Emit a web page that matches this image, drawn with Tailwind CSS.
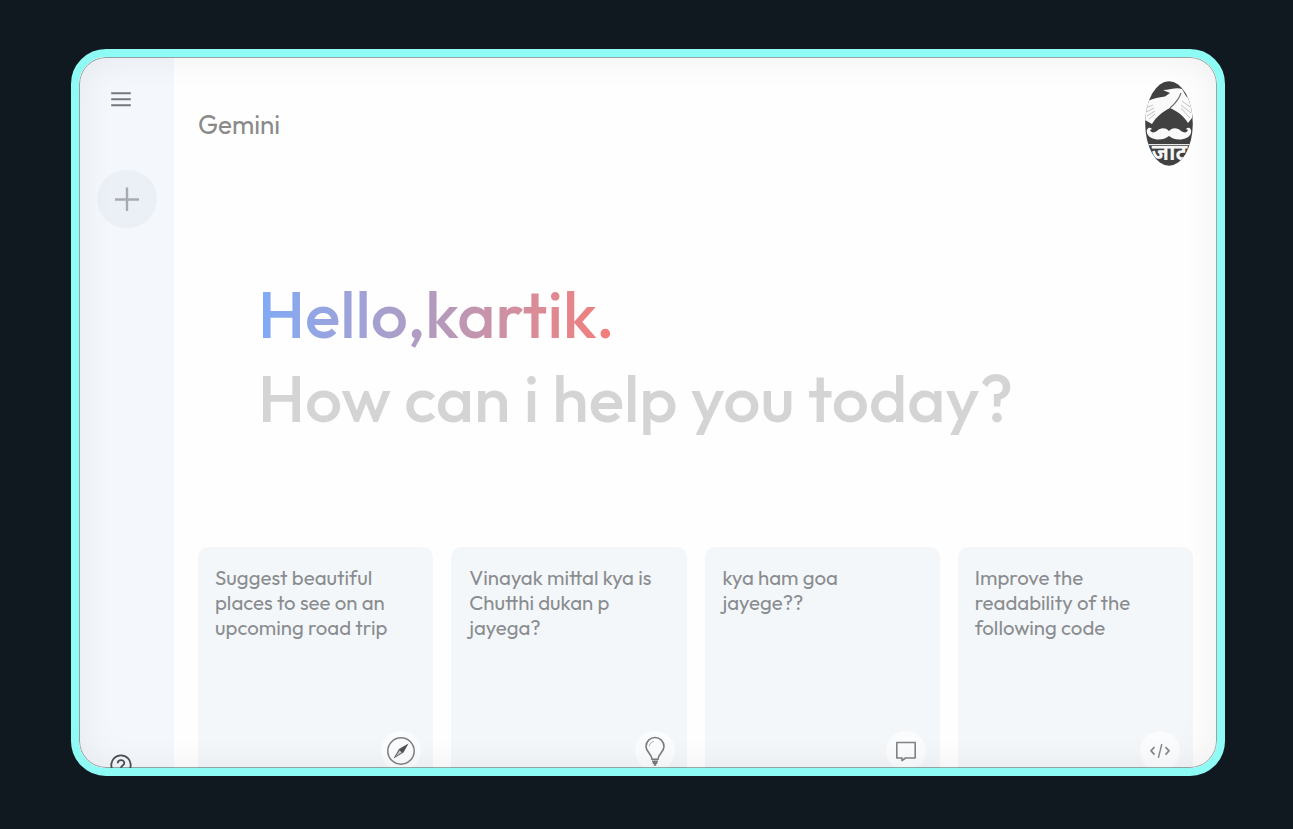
<!DOCTYPE html>
<html lang="en">
<head>
<meta charset="utf-8">
<title>Gemini</title>
<script src="https://cdn.jsdelivr.net/npm/@tailwindcss/browser@4"></script>
</head>
<body class="h-screen overflow-hidden bg-[#111920] pt-[49px] pl-[71px] font-[Outfit,Lato,sans-serif]">
<div class="relative flex h-[727px] w-[1154px] overflow-hidden rounded-[35px] border-8 border-[#8efcf5] bg-[#fefefe]">
  <aside class="flex w-[95px] shrink-0 flex-col items-start bg-[#f4f7fb] pl-px">
    <svg class="mt-[32px] ml-[31px] h-5 w-5 shrink-0" viewBox="0 0 20 20" fill="none" stroke="#74787c" stroke-width="2.1"><path d="M.2 4.3h19.6M.2 10.3h19.6M.2 16.2h19.6"/></svg>
    <div class="mt-[61px] ml-[17px] flex h-[58px] w-[60px] shrink-0 items-center justify-center rounded-full bg-[#ebeff6]">
      <svg class="h-6 w-6" viewBox="0 0 24 24" fill="none" stroke="#a8aaae" stroke-width="2.4"><path d="M0 12.5h24M12 .5v24"/></svg>
    </div>
    <svg class="mt-[526px] ml-[30px] h-[22px] w-[22px] shrink-0" viewBox="0 0 22 22" fill="none" stroke="#4c5053" stroke-width="1.8"><circle cx="11" cy="11" r="9.7"/><path d="M7.7 9.3c.2-4.2 6.6-4.1 6.6-.3 0 2.5-3.3 2.4-3.3 5"/></svg>
  </aside>
  <main class="flex min-w-0 flex-1 flex-col pt-px pr-6 pl-6">
    <header class="flex shrink-0 items-start justify-between pt-[23px]">
      <h1 class="mt-[27px] text-[26px] leading-[34px] font-normal whitespace-nowrap text-[#8a8a8a]">Gemini</h1>
      <svg class="h-[85px] w-12" viewBox="0 0 48 85">
        <defs><clipPath id="oval"><ellipse cx="24" cy="42.5" rx="23.8" ry="42.3"/></clipPath></defs>
        <g clip-path="url(#oval)">
          <rect width="48" height="85" fill="#414141"/>
          <path d="M0 22C5 18 12 16.500 20 15.500L25 12 18 9C26 9 31 6 37 8L41 15C46 19 48 28 47 37L43 42C39 35 32 30 25 27 17 31 11 36 7 43L0 39Z" fill="#fafafa"/>
          <path d="M36 12c-2 6-5 10-11 15" fill="none" stroke="#6a6a6a" stroke-width="1.1"/>
          <path d="M1 27l7-3M1 31l8-4M2 35l8-5M4 38l6-5M37 20l8 6M36 24l10 8M36 27l9 10" fill="none" stroke="#b4b4b4" stroke-width=".8"/>
          <path d="M24 50c4-4 9-3 12 0 3 2 6 2 7-1l-2-1c3-3 6 0 5 4-2 7-15 9-22 3-7 6-20 4-22-3-1-4 2-7 5-4l-2 1c1 3 4 3 7 1 3-3 8-4 12 0Z" fill="#fafafa"/>
          <path d="M0 63.700h48" stroke="#e6e6e6" stroke-width="1.300"/>
          <text x="24.500" y="79" text-anchor="middle" font-family="Noto Sans Devanagari, Noto Sans, sans-serif" font-size="22" font-weight="700" fill="#f7f7f7">जाट</text>
        </g>
      </svg>
    </header>
    <section class="mt-[106px] ml-[60px] shrink-0 text-[66px] leading-[84px] font-medium whitespace-nowrap">
      <p class="w-fit bg-linear-to-r from-[#7faaf6] via-[#b49abd] to-[#f47c76] bg-clip-text text-transparent">Hello,kartik.</p>
      <p class="text-[#d4d4d4]">How can i help you today?</p>
    </section>
    <section class="mt-[107px] grid h-[250px] shrink-0 grid-cols-4 gap-[18px] text-[20.4px] leading-[25px] font-normal whitespace-nowrap text-[#8a8d90]">
      <article class="relative rounded-[10px] bg-[#f4f7fa] px-[17px] pt-[18px]">
        <p>Suggest beautiful<br>places to see on an<br>upcoming road trip</p>
        <div class="absolute top-[184px] right-[12px] flex h-10 w-10 items-center justify-center rounded-full bg-[#fafcfd]">
          <svg class="h-[30px] w-[30px]" viewBox="0 0 30 30"><circle cx="15" cy="15" r="13.2" fill="none" stroke="#7c7f82" stroke-width="1.5"/><path d="M22.5 7.5 17.5 16.500 7.5 22.5 13 13Z" fill="#505356"/><path d="M9.5 20.6 13.5 14.3 15.900 16.5Z" fill="#c4c6c8"/></svg>
        </div>
      </article>
      <article class="relative rounded-[10px] bg-[#f4f7fa] px-[18px] pt-[18px]">
        <p>Vinayak mittal kya is<br>Chutthi dukan p<br>jayega?</p>
        <div class="absolute top-[184px] right-[12px] flex h-10 w-10 items-center justify-center rounded-full bg-[#fafcfd]">
          <svg class="h-[30px] w-[30px]" viewBox="0 0 30 30" fill="none" stroke="#7a7d80" stroke-width="1.6"><path d="M12 23.3C12 18 6 16.500 6 10.5a9 9 0 0 1 18 0C24 16.500 18 18 18 23.3Z"/><path d="M12 25.3h6M12.8 27.2h4.400M13.8 28.900h2.4" stroke-width="1.7"/><path d="M9.3 10.5c.2-3 2.2-4.7 4.5-5" stroke="#b0b2b4" stroke-width="1"/></svg>
        </div>
      </article>
      <article class="relative rounded-[10px] bg-[#f4f7fa] px-[18px] pt-[18px]">
        <p>kya ham goa<br>jayege??</p>
        <div class="absolute top-[184px] right-[14px] flex h-10 w-10 items-center justify-center rounded-full bg-[#fafcfd]">
          <svg class="h-[30px] w-[30px]" viewBox="0 0 30 30" fill="none" stroke="#808387" stroke-width="1.6" stroke-linejoin="round"><path d="M5.8 6.5h18.4v15.500H14.5L11 24.500v-2.5H5.8Z"/></svg>
        </div>
      </article>
      <article class="relative rounded-[10px] bg-[#f4f7fa] px-[17px] pt-[18px]">
        <p>Improve the<br>readability of the<br>following code</p>
        <div class="absolute top-[184px] right-[13px] flex h-10 w-10 items-center justify-center rounded-full bg-[#fafcfd]">
          <svg class="h-[30px] w-[30px]" viewBox="0 0 30 30" fill="none" stroke="#85888b" stroke-width="1.7"><path d="M9.5 11 6 14.8l3.5 3.8M20.5 11l3.5 3.8-3.5 3.8"/><path d="M16.8 8 13.4 21.8" stroke-width="1.4"/></svg>
        </div>
      </article>
    </section>
  </main>
  <div class="pointer-events-none absolute inset-0 rounded-[27px] shadow-[inset_0_0_36px_rgba(0,0,0,0.07),inset_0_0_0_1px_rgba(60,90,90,0.5)]"></div>
</div>
</body>
</html>
